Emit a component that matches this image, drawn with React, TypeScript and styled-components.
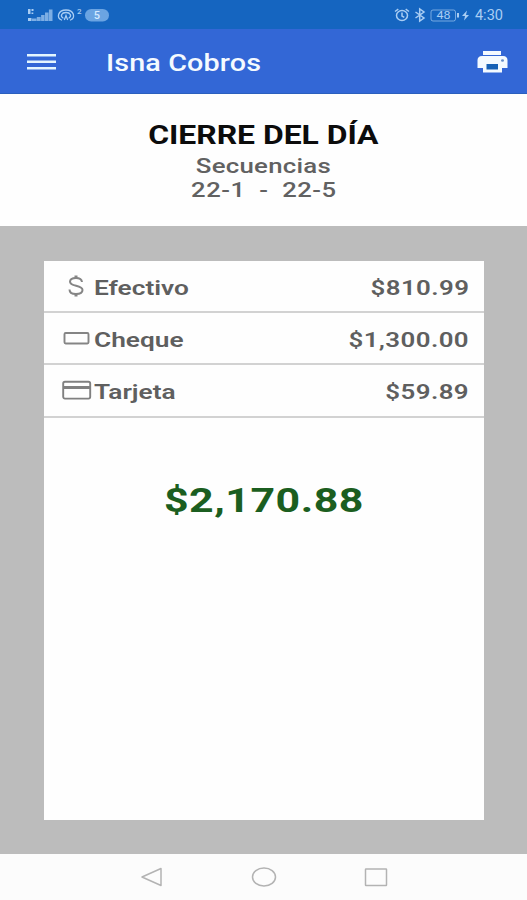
import React from "react";
import styled, { createGlobalStyle } from "styled-components";

const GlobalStyle = createGlobalStyle`
  * { box-sizing: border-box; }
  body { margin: 0; background: #fcfcfc; font-family: Roboto, "Liberation Sans", sans-serif; }
  svg { display: block; flex: none; }
`;

const Screen = styled.div`
  width: 527px;
  height: 900px;
  display: flex;
  flex-direction: column;
  overflow: hidden;
`;

const StatusBar = styled.div`
  height: 29px;
  flex: none;
  display: flex;
  justify-content: space-between;
  padding: 0 24px 0 27px;
  background: #1565c0;
  color: #a9cdf3;
`;

const StatusGroup = styled.div`
  display: flex;
  align-items: center;
  height: 30px;
`;

const AppBar = styled.header`
  height: 65px;
  flex: none;
  display: flex;
  align-items: center;
  padding: 2px 19px 0 27px;
  background: #3367d6;
  border-bottom: 1px solid #2b5fbd;
  color: #f4faff;
`;

const Wide = styled.span<{ $size: number; $scale: number; $weight?: number; $spacing?: number; $from?: string }>`
  display: inline-block;
  white-space: pre;
  font-size: ${(p) => p.$size}px;
  font-weight: ${(p) => p.$weight ?? 700};
  letter-spacing: ${(p) => p.$spacing ?? 0}px;
  margin-right: ${(p) => -(p.$spacing ?? 0)}px;
  line-height: 24px;
  transform: scaleX(${(p) => p.$scale});
  transform-origin: ${(p) => p.$from ?? "left"} center;
`;

const Title = styled.div`
  flex: 1;
  margin-left: 50px;
  padding-top: 3px;
`;

const Heading = styled.section`
  height: 132px;
  flex: none;
  display: flex;
  flex-direction: column;
  align-items: center;
  padding-top: 30px;
  background: #fefefe;
  color: #616161;
`;

const HeadingTitle = styled.div`
  height: 30px;
  color: #0c0c0c;
`;

const HeadingLine = styled.div`
  height: 24px;
`;

const Body = styled.main`
  height: 628px;
  flex: none;
  padding: 35px 43px 34px 44px;
  background: #bcbcbc;
`;

const Card = styled.div`
  height: 559px;
  background: #fefefe;
`;

const Row = styled.div`
  height: 52.2px;
  display: flex;
  align-items: center;
  padding: 3px 15px 0 18px;
  border-bottom: 2px solid #d2d2d2;
  color: #5f5f5f;
`;

const RowIcon = styled.div`
  width: 32px;
  flex: none;
  padding-bottom: 3px;
`;

const RowLabel = styled.div`
  flex: 1;
`;

const Total = styled.div`
  display: flex;
  justify-content: center;
  padding-top: 71px;
  color: #1b5e20;
`;

const NavBar = styled.nav`
  height: 46px;
  flex: none;
  display: flex;
  justify-content: center;
  align-items: center;
  gap: 87px;
  background: #fcfcfc;
`;

const SignalIcons = () => (
  <svg width="83" height="18" viewBox="0 0 83 18" fill="none">
    <g fill="#a9cdf3">
      <path d="M1 3h2.500v5H1zM4.500 3h2v2h-2zM4.500 6.500h1.800v1.500H4.500zM1 12h3.500v3H1z" />
      <path d="M5 12.500h4.500V15H5zM9.800 11h3.900v4H9.800zM14.100 9h3.500v6h-3.500zM18 6.500h3.500V15H18zM21.900 3.500h3.600V15h-3.600z" opacity=".7" />
    </g>
    <g stroke="#a9cdf3" strokeWidth="1.300" strokeLinecap="round">
      <path d="M34.500 14C29.500 12 30.500 4 39 4s9.500 8 4.500 10" />
      <path d="M36 12c-3-2-1.500-5.500 3-5.500s6 3.500 3 5.500" />
      <path d="M37.500 13.500l1.500-4 1.500 4" />
    </g>
    <text x="50" y="7.500" fontSize="8" fontWeight="500" fontFamily="Roboto, sans-serif" fill="#a9cdf3">2</text>
    <rect x="58" y="3" width="24" height="12.500" rx="6.250" fill="#6ba4e2" />
    <text x="66.800" y="13" fontSize="11" fontWeight="500" fontFamily="Roboto, sans-serif" fill="#d5eaff">5</text>
  </svg>
);

const DeviceIcons = () => (
  <svg width="83" height="18" viewBox="0 0 83 18" fill="none" stroke="#a9cdf3" strokeWidth="1.500">
    <ellipse cx="9" cy="9.500" rx="5.500" ry="5" />
    <path d="M9 6.500v3.500l2.300 1.300M2 5.500l3.300-2.300M16 5.500l-3.300-2.300" />
    <path d="M22.500 6l8.500 6-4.300 3V3l4.300 3-8.500 6" />
    <rect x="38" y="4" width="24.500" height="11" rx="2" strokeWidth="1" opacity=".65" />
    <path d="M65 7v4.500" strokeWidth="2" />
    <path d="M74 4.500L69 10h3l-1 4.500 5-5.500h-3z" fill="#a9cdf3" stroke="none" />
    <text x="43.500" y="13.200" fontSize="10.500" textLength="14" lengthAdjust="spacingAndGlyphs" fontFamily="Roboto, sans-serif" fill="#a9cdf3" stroke="none">48</text>
  </svg>
);

const MenuIcon = () => (
  <svg width="29" height="18" viewBox="0 0 29 18" fill="#e4f6ff">
    <path d="M0 1h29v2.500H0zM0 7.500h29V10H0zM0 14h29v2.500H0z" />
  </svg>
);

const PrinterIcon = () => (
  <svg width="31" height="24" viewBox="0 0 31 24">
    <path d="M6 1h18v4H6z" fill="#f4faff" />
    <path d="M5 6h21c3 0 4.500 1.800 4.500 4.200V18H25v4.500H6V18H.5v-7.800C.5 7.800 2 6 5 6z" fill="#f4faff" />
    <path d="M9.500 14h11.500v5.500H9.500z" fill="#1761b5" />
    <ellipse cx="25.500" cy="10.500" rx="1.500" ry="1.200" fill="#658dc7" />
  </svg>
);

const DollarIcon = () => (
  <svg width="27" height="24" viewBox="0 0 27 24" fill="none" stroke="#858585" strokeWidth="2">
    <path d="M20 8c-.3-2.500-2.500-4-6-4-3.700 0-6 1.500-6 3.700 0 5.300 12.500 2.700 12.500 8.300 0 2.500-2.600 4-6.500 4-4 0-6.500-1.800-6.500-4.500" />
    <path d="M14 1.500v3M14 19.500v3" strokeWidth="3" />
  </svg>
);

const ChequeIcon = () => (
  <svg width="29" height="24" viewBox="0 0 29 24" fill="none" stroke="#858585" strokeWidth="1.900">
    <rect x="2.500" y="7" width="24" height="10.500" rx="1.200" />
  </svg>
);

const CreditCardIcon = () => (
  <svg width="30" height="24" viewBox="0 0 30 24" fill="none" stroke="#808080" strokeWidth="1.900">
    <rect x="1.200" y="3.800" width="27" height="16.800" rx="1.800" />
    <path d="M1.200 9.500h27" strokeWidth="3" />
  </svg>
);

const BackIcon = () => (
  <svg width="24" height="20" viewBox="0 0 24 20" fill="none" stroke="#b3b3b3" strokeWidth="1.500" strokeLinejoin="round">
    <path d="M2 10L21 1.500v17z" />
  </svg>
);

const HomeIcon = () => (
  <svg width="26" height="20" viewBox="0 0 26 20" fill="none" stroke="#b3b3b3" strokeWidth="1.500">
    <ellipse cx="13" cy="10" rx="11.500" ry="9" />
  </svg>
);

const RecentsIcon = () => (
  <svg width="24" height="20" viewBox="0 0 24 20" fill="none" stroke="#b3b3b3" strokeWidth="1.500">
    <rect x="1.500" y="2" width="21" height="16.500" rx=".5" />
  </svg>
);

const payments = [
  { label: "Efectivo", amount: "$810.99", icon: <DollarIcon /> },
  { label: "Cheque", amount: "$1,300.00", icon: <ChequeIcon /> },
  { label: "Tarjeta", amount: "$59.89", icon: <CreditCardIcon /> },
];

export default function App() {
  return (
    <Screen>
      <GlobalStyle />
      <StatusBar>
        <StatusGroup><SignalIcons /></StatusGroup>
        <StatusGroup>
          <DeviceIcons />
          <Wide $size={14} $scale={1.04} $weight={400} $from="right">4:30</Wide>
        </StatusGroup>
      </StatusBar>
      <AppBar>
        <MenuIcon />
        <Title><Wide $size={23} $scale={1.25} $weight={500} $spacing={0.1}>Isna Cobros</Wide></Title>
        <PrinterIcon />
      </AppBar>
      <Heading>
        <HeadingTitle><Wide $size={25} $scale={1.275} $from="center">CIERRE DEL DÍA</Wide></HeadingTitle>
        <HeadingLine><Wide $size={20} $scale={1.29} $weight={500} $spacing={0.2} $from="center">Secuencias</Wide></HeadingLine>
        <HeadingLine><Wide $size={20} $scale={1.28} $weight={500} $spacing={0.4} $from="center">22-1  -  22-5</Wide></HeadingLine>
      </Heading>
      <Body>
        <Card>
          {payments.map((p) => (
            <Row key={p.label}>
              <RowIcon>{p.icon}</RowIcon>
              <RowLabel><Wide $size={21} $scale={1.25} $weight={600}>{p.label}</Wide></RowLabel>
              <Wide $size={21} $scale={1.23} $spacing={0.35} $weight={600} $from="right">{p.amount}</Wide>
            </Row>
          ))}
          <Total><Wide $size={33} $scale={1.3} $spacing={0.4} $from="center">$2,170.88</Wide></Total>
        </Card>
      </Body>
      <NavBar><BackIcon /><HomeIcon /><RecentsIcon /></NavBar>
    </Screen>
  );
}
